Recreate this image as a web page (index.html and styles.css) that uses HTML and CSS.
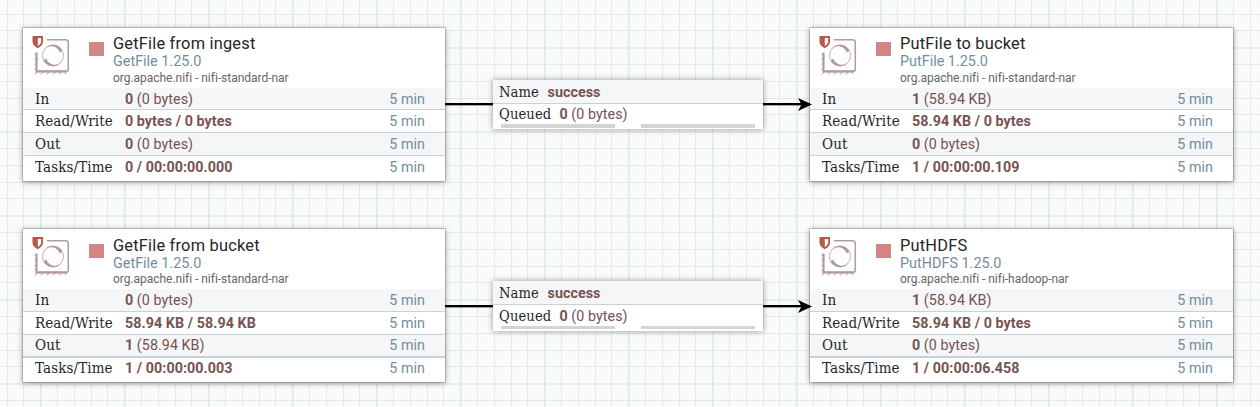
FILE: index.html
```
<!DOCTYPE html>
<html lang="en">
<head>
<meta charset="utf-8">
<title>NiFi Flow</title>
<link rel="stylesheet" href="styles.css">
</head>
<body>
<svg class="defs" width="0" height="0">
  <symbol id="proc" viewBox="0 0 40 42">
    <g fill="none" stroke="#b29b9b">
      <path d="M15 4.800H33.500Q36.300 4.800 36.300 7.600V33.800Q36.300 36.600 33.500 36.600H4.300" stroke-width="1.500"/>
      <path d="M4.500 17.500V36.400H34" stroke-width="2.200"/>
      <path d="M4.500 18l-2 2M4.500 23l-2 2M4.500 28l-2 2M4.500 33l-2 2M5 37l-2 2.500M11 37l-2 2.500M17 37l-2 2.500M23 37l-2 2.500M29 37l-2 2.500M35 36l-2 3" stroke-width="1"/>
      <circle cx="21" cy="20.500" r="10.500" stroke-width=".8"/>
    </g>
    <path d="M13 13.500A10.700 10.700 0 0 1 30.500 15.500L27.800 17.500A9.300 9.300 0 0 0 13 13.500ZM11.500 25.500L14.200 23.500A9.300 9.300 0 0 0 29 27.500A10.700 10.700 0 0 1 11.500 25.500Z" fill="#b09a9a"/>
    <path d="M0 .6H11.500V6.500Q11.500 11 5.700 13.700Q0 11 0 6.500Z" fill="#fff" stroke="#fff" stroke-width="3"/>
    <path d="M.5 1H11V6.500Q11 10.500 5.700 13.200Q.5 10.500 .5 6.500Z" fill="#ba554a"/>
    <path d="M5.800 3H9.200V6.500Q9.200 9 5.800 11Z" fill="#fff"/>
  </symbol>
</svg>
<main class="canvas">
  <svg class="grid" width="1260" height="407">
    <defs>
      <pattern id="lines" x="40" y="47" width="84" height="84" patternUnits="userSpaceOnUse">
        <path d="M17.500 0V84M34.500 0V84M51.500 0V84M67.500 0V84M0 17.500H84M0 34.500H84M0 51.500H84M0 67.500H84" stroke="#e4e9eb" fill="none"/>
        <path d="M.85 0V84M0 1H84" stroke="#e2e9ea" stroke-width="1.700" fill="none"/>
      </pattern>
    </defs>
    <rect width="1260" height="407" fill="url(#lines)"/>
  </svg>
  <section class="row">
    <article class="processor">
      <header><svg class="icon"><use href="#proc"/></svg><i class="stopped"></i><div class="titles"><h2>GetFile from ingest</h2><h3>GetFile 1.25.0</h3><p>org.apache.nifi - nifi-standard-nar</p></div></header>
      <div class="stat"><span class="label">In</span><span class="value"><b>0</b> (0 bytes)</span><span class="time">5 min</span></div>
      <div class="stat"><span class="label">Read/Write</span><span class="value"><b>0 bytes / 0 bytes</b></span><span class="time">5 min</span></div>
      <div class="stat"><span class="label">Out</span><span class="value"><b>0</b> (0 bytes)</span><span class="time">5 min</span></div>
      <div class="stat"><span class="label">Tasks/Time</span><span class="value"><b>0 / 00:00:00.000</b></span><span class="time">5 min</span></div>
    </article>
    <div class="link"></div>
    <article class="connection">
      <div class="cline"><span class="label">Name</span><b>success</b></div>
      <div class="cline"><span class="label wide">Queued</span><span><b>0</b> (0 bytes)</span></div>
      <div class="bars"><i></i><i></i></div>
    </article>
    <div class="link arrow"><svg width="15" height="16" viewBox="0 0 15 16"><path d="M0 1L14 7.500L0 14L3.500 7.500Z"/></svg></div>
    <article class="processor">
      <header><svg class="icon"><use href="#proc"/></svg><i class="stopped"></i><div class="titles"><h2>PutFile to bucket</h2><h3>PutFile 1.25.0</h3><p>org.apache.nifi - nifi-standard-nar</p></div></header>
      <div class="stat"><span class="label">In</span><span class="value"><b>1</b> (58.94 KB)</span><span class="time">5 min</span></div>
      <div class="stat"><span class="label">Read/Write</span><span class="value"><b>58.94 KB / 0 bytes</b></span><span class="time">5 min</span></div>
      <div class="stat"><span class="label">Out</span><span class="value"><b>0</b> (0 bytes)</span><span class="time">5 min</span></div>
      <div class="stat"><span class="label">Tasks/Time</span><span class="value"><b>1 / 00:00:00.109</b></span><span class="time">5 min</span></div>
    </article>
  </section>
  <section class="row lower">
    <article class="processor">
      <header><svg class="icon"><use href="#proc"/></svg><i class="stopped"></i><div class="titles"><h2>GetFile from bucket</h2><h3>GetFile 1.25.0</h3><p>org.apache.nifi - nifi-standard-nar</p></div></header>
      <div class="stat"><span class="label">In</span><span class="value"><b>0</b> (0 bytes)</span><span class="time">5 min</span></div>
      <div class="stat"><span class="label">Read/Write</span><span class="value"><b>58.94 KB / 58.94 KB</b></span><span class="time">5 min</span></div>
      <div class="stat"><span class="label">Out</span><span class="value"><b>1</b> (58.94 KB)</span><span class="time">5 min</span></div>
      <div class="stat"><span class="label">Tasks/Time</span><span class="value"><b>1 / 00:00:00.003</b></span><span class="time">5 min</span></div>
    </article>
    <div class="link"></div>
    <article class="connection">
      <div class="cline"><span class="label">Name</span><b>success</b></div>
      <div class="cline"><span class="label wide">Queued</span><span><b>0</b> (0 bytes)</span></div>
      <div class="bars"><i></i><i></i></div>
    </article>
    <div class="link arrow"><svg width="15" height="16" viewBox="0 0 15 16"><path d="M0 1L14 7.500L0 14L3.500 7.500Z"/></svg></div>
    <article class="processor">
      <header><svg class="icon"><use href="#proc"/></svg><i class="stopped"></i><div class="titles"><h2>PutHDFS</h2><h3>PutHDFS 1.25.0</h3><p>org.apache.nifi - nifi-hadoop-nar</p></div></header>
      <div class="stat"><span class="label">In</span><span class="value"><b>1</b> (58.94 KB)</span><span class="time">5 min</span></div>
      <div class="stat"><span class="label">Read/Write</span><span class="value"><b>58.94 KB / 0 bytes</b></span><span class="time">5 min</span></div>
      <div class="stat"><span class="label">Out</span><span class="value"><b>0</b> (0 bytes)</span><span class="time">5 min</span></div>
      <div class="stat"><span class="label">Tasks/Time</span><span class="value"><b>1 / 00:00:06.458</b></span><span class="time">5 min</span></div>
    </article>
  </section>
</main>
</body>
</html>
```
FILE: styles.css
```
* { box-sizing: border-box; }
body { margin: 0; width: 1260px; height: 407px; overflow: hidden; background: #f9fafc; font-family: Roboto, sans-serif; font-size: 14.3px; letter-spacing: .05px; color: #775351; }
.defs { position: absolute; }
.canvas { position: relative; height: 407px; padding: 28px 0 0 23px; display: flex; flex-direction: column; gap: 48px; }
.grid { position: absolute; inset: 0; }
.row { position: relative; display: flex; align-items: flex-start; height: 153px; }
.processor { width: 422px; height: 153px; background: #fff; box-shadow: 0 0 0 1px rgba(0,0,0,.17), 0 1px 6px rgba(0,0,0,.4); }
.processor:last-child { width: 423px; }
header { display: flex; height: 60px; }
.icon { width: 40px; height: 42px; margin: 7px 0 0 9px; flex: none; }
.stopped { width: 15px; height: 14px; margin: 14px 11px 0 17px; background: #d18686; }
.titles { margin-left: -2px; padding-top: 6px; white-space: nowrap; }
h2, h3, p { margin: 0; font-weight: 400; }
h2 { font-size: 16.4px; line-height: 19px; color: #262626; letter-spacing: .2px; }
h3 { font-size: 14.4px; line-height: 17px; color: #728e9b; letter-spacing: 0; }
p { font-size: 12px; line-height: 17px; color: #666; letter-spacing: -.03px; }
.stat { display: flex; align-items: center; height: 23px; padding: 0 20px 0 12px; border-bottom: 1px solid #c7d2d7; white-space: nowrap; line-height: 22px; }
.stat:nth-child(2) { height: 22px; }
.stat:nth-child(even) { background: #f4f6f7; }
.stat:last-child { height: 25px; border: 0; padding-bottom: 4px; }
.label { width: 90px; font-family: "Roboto Slab", "DejaVu Serif", serif; font-size: 14.3px; letter-spacing: .1px; color: #262626; transform: scaleX(.945); transform-origin: 0 50%; }
.time { margin-left: auto; color: #728e9b; }
b { font-weight: 700; }
.link { width: 48px; height: 3px; margin-top: 75px; background: linear-gradient(#000 0 2px, rgba(0,0,0,.35) 2px); }
.arrow { position: relative; width: 47px; }
.arrow svg { position: absolute; right: -3px; top: -6px; z-index: 2; }
.connection { width: 270px; height: 49px; margin-top: 52px; background: #fff; box-shadow: 0 0 6px rgba(0,0,0,.4); }
.cline { display: flex; align-items: center; height: 24px; padding-left: 6px; line-height: 22px; white-space: nowrap; }
.cline:first-child { background: #f4f6f7; border-bottom: 1px solid #c7d2d7; }
.cline + .cline { height: 20px; }
.cline .label { width: 48.5px; transform: scaleX(.92); }
.cline .wide { width: 60.5px; }
.bars { display: flex; gap: 26px; padding-left: 8px; }
.bars i { width: 114px; height: 4px; background: #d4d4d4; }

.lower .stopped { margin-top: 15px; }
.lower .titles { padding-top: 7px; }
.lower p { line-height: 15px; }
.lower .stat:nth-child(2) { height: 23px; }
.lower .stat:nth-child(4) { border-bottom-width: 2px; padding-bottom: 1px; }
.lower .stat:last-child { height: 24px; }
.lower .link { margin-top: 76px; }
.lower .connection { height: 50px; }
.lower .cline + .cline { height: 21px; padding-top: 1px; }
.lower .bars i { height: 3px; }
```
